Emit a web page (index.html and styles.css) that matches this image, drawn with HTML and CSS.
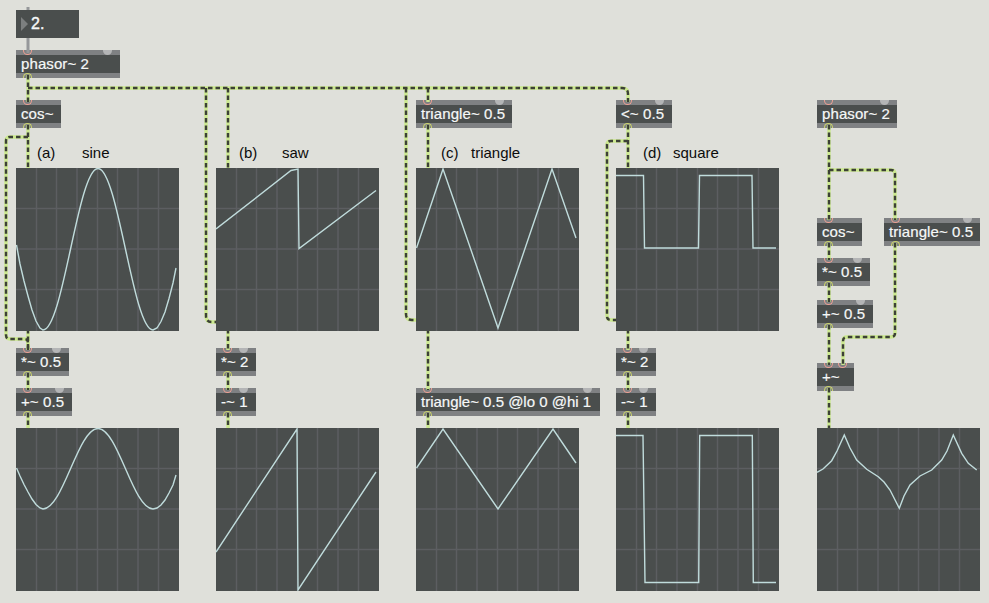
FILE: index.html
```html
<!DOCTYPE html>
<html lang="en">
<head>
<meta charset="utf-8">
<title>Waveforms</title>
<link rel="stylesheet" href="styles.css">
</head>
<body>
<div class="patcher">

  <!-- objects -->
  <div class="num n-num"><span class="arrow"></span>2.</div>

  <div class="obj n-phasor"><i class="in"></i><i class="cold"></i><i class="out"></i>phasor~ 2</div>
  <div class="obj n-cos"><i class="in"></i><i class="out"></i>cos~</div>
  <div class="obj n-tri"><i class="in"></i><i class="cold"></i><i class="out"></i>triangle~ 0.5</div>
  <div class="obj n-lt"><i class="in"></i><i class="cold"></i><i class="out"></i>&lt;~ 0.5</div>

  <div class="obj n-mul-a"><i class="in"></i><i class="cold"></i><i class="out"></i>*~ 0.5</div>
  <div class="obj n-add-a"><i class="in"></i><i class="cold"></i><i class="out"></i>+~ 0.5</div>
  <div class="obj n-mul-b"><i class="in"></i><i class="cold"></i><i class="out"></i>*~ 2</div>
  <div class="obj n-sub-b"><i class="in"></i><i class="cold"></i><i class="out"></i>-~ 1</div>
  <div class="obj n-tri-c"><i class="in"></i><i class="cold"></i><i class="out"></i>triangle~ 0.5 @lo 0 @hi 1</div>
  <div class="obj n-mul-d"><i class="in"></i><i class="cold"></i><i class="out"></i>*~ 2</div>
  <div class="obj n-sub-d"><i class="in"></i><i class="cold"></i><i class="out"></i>-~ 1</div>

  <div class="obj n-phasor-r"><i class="in"></i><i class="cold"></i><i class="out"></i>phasor~ 2</div>
  <div class="obj n-cos-r"><i class="in"></i><i class="out"></i>cos~</div>
  <div class="obj n-tri-r"><i class="in"></i><i class="cold"></i><i class="out"></i>triangle~ 0.5</div>
  <div class="obj n-mul-r"><i class="in"></i><i class="cold"></i><i class="out"></i>*~ 0.5</div>
  <div class="obj n-add-r"><i class="in"></i><i class="cold"></i><i class="out"></i>+~ 0.5</div>
  <div class="obj n-sum-r"><i class="in"></i><i class="in in2"></i><i class="out"></i>+~</div>

  <!-- patch cords -->
  <svg class="cords" width="989" height="603" viewBox="0 0 989 603">
    <defs>
      <g id="signal">
        <path d="M28 75V102"/>
        <path d="M28 88H622Q628 88 628 94V102"/>
        <path d="M428 88V102"/>
        <path d="M206 88V316Q206 322 212 322H228"/>
        <path d="M228 88V170"/>
        <path d="M406 88V314Q406 320 412 320H428"/>

        <path d="M28 125V170"/>
        <path d="M28 137H10Q6 137 6 141V335Q6 339 10 339H24Q28 339 28 343V350"/>
        <path d="M428 125V170"/>
        <path d="M628 125V170"/>
        <path d="M628 141H611Q607 141 607 145V316Q607 320 611 320H628"/>

        <path d="M28 329V350"/>
        <path d="M228 329V350"/>
        <path d="M428 329V390"/>
        <path d="M628 329V350"/>

        <path d="M28 373V390"/>
        <path d="M28 413V430"/>
        <path d="M228 373V390"/>
        <path d="M228 413V430"/>
        <path d="M428 413V430"/>
        <path d="M628 373V390"/>
        <path d="M628 413V430"/>

        <path d="M829 125V220"/>
        <path d="M829 170H891Q895 170 895 174V220"/>
        <path d="M829 243V260"/>
        <path d="M829 283V302"/>
        <path d="M829 325V365"/>
        <path d="M895 243V333Q895 337 891 337H847Q843 337 843 341V365"/>
        <path d="M829 388V430"/>
      </g>
    </defs>
    <path class="cord-msg" d="M28 7V10M28 38V53"/>
    <use class="cord-base" href="#signal"/>
    <use class="cord-dash" href="#signal"/>
  </svg>

  <!-- scope grid, shared by all nine -->
  <svg class="hidden" width="0" height="0">
    <defs>
      <g id="grid">
        <path class="grid" d="M20.5 0V163M40.5 0V163M61 0V163M81.5 0V163M101.5 0V163M122 0V163M142.5 0V163M0 40.5H163M0 81H163M0 121.5H163"/>
      </g>
    </defs>
  </svg>

  <svg class="scope s-a1" viewBox="0 0 163 163"><use href="#grid"/>
    <path class="trace" d="M0.5 77L4 96L8 113L12 128L16 142L20 153L24 160L27 162C47 162 62 0.5 82 0.5C102 0.5 117 162 137 162L141 160L145 153.5L149 144L153 130.5L157 115L160 100"/></svg>
  <svg class="scope s-b1" viewBox="0 0 163 163"><use href="#grid"/>
    <path class="trace" d="M0 61L75 2.5L82 1L83 80.5L160 22.5"/></svg>
  <svg class="scope s-c1" viewBox="0 0 163 163"><use href="#grid"/>
    <path class="trace" d="M0.5 80L27 1L82 160L136 1L160 70"/></svg>
  <svg class="scope s-d1" viewBox="0 0 163 163"><use href="#grid"/>
    <path class="trace" d="M0 7.5H27.5L28.5 80H82.5L83.5 7.5H136L137 80H160"/></svg>

  <svg class="scope s-a2" viewBox="0 0 163 163"><use href="#grid"/>
    <path class="trace" d="M0.5 40L4 48L8 56.5L12 64L16 71L20 76.5L24 80L27 81C47 81 62 0.5 82 0.5C102 0.5 117 81 137 81L141 80L145 77L149 72L153 65L157 57L160 47"/></svg>
  <svg class="scope s-b2" viewBox="0 0 163 163"><use href="#grid"/>
    <path class="trace" d="M0 124L81 1L82 162L160 44"/></svg>
  <svg class="scope s-c2" viewBox="0 0 163 163"><use href="#grid"/>
    <path class="trace" d="M0.5 40L27 1L82 81L137 1L160 35"/></svg>
  <svg class="scope s-d2" viewBox="0 0 163 163"><use href="#grid"/>
    <path class="trace" d="M0 7.5H27L29 154.5H82.7L83.7 7.5H136.3L137.3 154.5H160"/></svg>
  <svg class="scope s-r2" viewBox="0 0 163 163"><use href="#grid"/>
    <path class="trace" d="M0 44.3L6 41L14.7 32.7L20 23L27.3 7L33 20L39.7 32L49.7 41.3L61.3 48.7L67 54L73 62L82.3 80.3L87 68L93 57L103 48L114.7 42L124.7 32L130 23L136.3 7L144.7 25.3L151.3 35.3L159.7 42"/></svg>

  <!-- comments -->
  <span class="note l-a">(a)</span><span class="note l-sine">sine</span>
  <span class="note l-b">(b)</span><span class="note l-saw">saw</span>
  <span class="note l-c">(c)</span><span class="note l-triangle">triangle</span>
  <span class="note l-d">(d)</span><span class="note l-square">square</span>
</div>
</body>
</html>
```

FILE: styles.css
```css
body {
  margin: 0;
  background-color: #dfe0da;
}
.patcher {
  position: relative;
  width: 989px;
  height: 603px;
  overflow: hidden;
  font-family: "Liberation Sans", Arial, sans-serif;
  font-size: 15px;
}

/* boxes */
.obj, .num {
  position: absolute;
  box-sizing: border-box;
  height: 28px;
  padding-left: 5px;
  line-height: 28px;
  color: #f6f8f8;
  white-space: nowrap;
  background-color: #4a4e4d;
  -webkit-text-stroke: 0.2px #f6f8f8;
}
.obj {
  border-top: 5px solid #7f8183;
  border-bottom: 5px solid #7f8183;
  line-height: 18px;
  letter-spacing: 0.1px;
}
.num {
  left: 16px;
  top: 10px;
  width: 63px;
  padding-left: 15px;
  font-size: 16px;
  -webkit-text-stroke: 0.4px #f6f8f8;
}
.arrow {
  position: absolute;
  left: 5px;
  top: 7px;
  border-left: 7px solid #7c7f7f;
  border-top: 7px solid transparent;
  border-bottom: 7px solid transparent;
}
.in, .out, .cold {
  position: absolute;
  box-sizing: border-box;
  width: 9px;
  height: 5px;
}
.in {
  left: 7px;
  top: -5px;
  border: 1px solid #ee9f93;
  border-top: 0;
  border-radius: 0 0 5px 5px;
}
.in2 {
  left: 21px;
}
.out {
  left: 7px;
  bottom: -5px;
  border: 1px solid #cbd56c;
  border-bottom: 0;
  border-radius: 5px 5px 0 0;
}
.cold {
  right: 8px;
  top: -5px;
  background-color: #b4b5b6;
  border-radius: 0 0 5px 5px;
}

.n-phasor { left: 16px; top: 50px; width: 104px; }
.n-cos { left: 16px; top: 100px; width: 45px; }
.n-tri { left: 416px; top: 100px; width: 96px; }
.n-lt { left: 616px; top: 100px; width: 56px; }
.n-mul-a { left: 16px; top: 348px; width: 53px; }
.n-add-a { left: 16px; top: 388px; width: 56px; }
.n-mul-b { left: 216px; top: 348px; width: 40px; }
.n-sub-b { left: 216px; top: 388px; width: 40px; }
.n-tri-c { left: 416px; top: 388px; width: 184px; letter-spacing: 0; }
.n-mul-d { left: 616px; top: 348px; width: 40px; }
.n-sub-d { left: 616px; top: 388px; width: 40px; }
.n-phasor-r { left: 817px; top: 100px; width: 80px; }
.n-cos-r { left: 817px; top: 218px; width: 45px; }
.n-tri-r { left: 884px; top: 218px; width: 96px; }
.n-mul-r { left: 817px; top: 258px; width: 53px; }
.n-add-r { left: 817px; top: 300px; width: 56px; }
.n-sum-r { left: 817px; top: 363px; width: 37px; }

/* cords */
.cords {
  position: absolute;
  left: 0;
  top: 0;
}
.cords use {
  fill: none;
}
.cord-msg {
  fill: none;
  stroke: #96989a;
  stroke-width: 3;
}
.cord-base {
  stroke: #cbe88e;
  stroke-width: 3.4;
}
.cord-dash {
  stroke: #3c4036;
  stroke-width: 2.4;
  stroke-dasharray: 4.5 3;
}

/* scopes */
.hidden {
  position: absolute;
}
.scope {
  position: absolute;
  width: 163px;
  height: 163px;
  background-color: #4a4e4d;
}
.grid {
  fill: none;
  stroke: #5c5e61;
  stroke-width: 1.5;
}
.trace {
  fill: none;
  stroke: #c0dcdc;
  stroke-width: 1.4;
}
.s-a1 { left: 16px; top: 168px; }
.s-b1 { left: 216px; top: 168px; }
.s-c1 { left: 416px; top: 168px; }
.s-d1 { left: 616px; top: 168px; }
.s-a2 { left: 16px; top: 428px; }
.s-b2 { left: 216px; top: 428px; }
.s-c2 { left: 416px; top: 428px; }
.s-d2 { left: 616px; top: 428px; }
.s-r2 { left: 817px; top: 428px; }

/* comments */
.note {
  position: absolute;
  top: 144px;
  line-height: 18px;
  color: #0c0c0c;
}
.l-a { left: 37px; }
.l-sine { left: 82px; }
.l-b { left: 239px; }
.l-saw { left: 282px; }
.l-c { left: 441px; }
.l-triangle { left: 471px; }
.l-d { left: 643px; }
.l-square { left: 673px; }
```
